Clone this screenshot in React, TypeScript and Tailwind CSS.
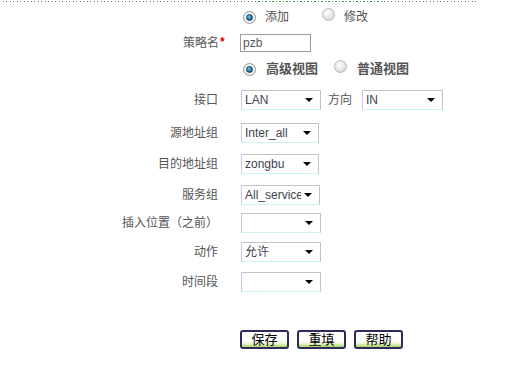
import React from 'react'

const font = "font-['Liberation_Sans','Noto_Sans_CJK_SC',sans-serif]"

function Radio({ checked }: { checked?: boolean }) {
  return checked ? (
    <span className="inline-flex h-[13px] w-[13px] shrink-0 items-center justify-center rounded-full border border-[#9a9a9a] bg-[radial-gradient(circle,#ffffff_40%,#d4d4d4)]">
      <span className="h-[7px] w-[7px] rounded-full border border-[#0d3d5c] bg-[radial-gradient(circle_at_40%_35%,#7ec8ef,#1b6ea6_60%,#0d4a75)]" />
    </span>
  ) : (
    <span className="inline-block h-[13px] w-[13px] shrink-0 rounded-full border border-[#b8b8b8] bg-[radial-gradient(circle_at_40%_35%,#ffffff,#e2e2e2_60%,#c6c6c6)]" />
  )
}

function Select({ value, width = 'w-[80px]' }: { value?: string; width?: string }) {
  return (
    <div
      className={`${width} flex h-[20px] items-center border border-[#c3c3c3] border-l-[#c8c8f4] border-b-[#cdf4f4] bg-white pl-[3px] pr-[7px]`}
    >
      <span className="min-w-0 flex-1 overflow-hidden whitespace-nowrap text-[12px] text-[#3f3f50]">{value}</span>
      <span className="ml-[3px] h-0 w-0 shrink-0 border-x-[4px] border-t-[4px] border-x-transparent border-t-black" />
    </div>
  )
}

function Row({ label, children, className }: { label: React.ReactNode; children: React.ReactNode; className: string }) {
  return (
    <div className={`flex h-[22px] items-center ${className}`}>
      <div className="w-[218px] shrink-0 text-right text-[12px] text-[#555]">{label}</div>
      <div className="ml-[23px] flex items-center">{children}</div>
    </div>
  )
}

function Btn({ children }: { children: React.ReactNode }) {
  return (
    <button className="flex h-[19px] w-[49px] items-center justify-center rounded-[3px] border-2 border-[#2f2a5c] bg-[linear-gradient(to_bottom,#ffffff_55%,#eef8dc_75%,#a9d65e)] text-[13px] leading-none text-black">
      {children}
    </button>
  )
}

export default function App() {
  return (
    <div className={`relative h-[387px] w-[513px] overflow-hidden bg-white ${font}`}>
      {/* dotted separator */}
      <div className="ml-[3px] mt-px h-px w-[473px] bg-[repeating-linear-gradient(90deg,#4b8a4b_0_1px,transparent_1px_3.5px)]" />

      {/* mode */}
      <div className="mt-[4px] flex h-[22px] items-center pl-[243px] text-[12px] text-[#555]">
        <Radio checked />
        <span className="ml-[9px]">添加</span>
        <span className="ml-[33px]"><Radio /></span>
        <span className="ml-[9px]">修改</span>
      </div>

      <div className="mt-[4px] flex h-[22px] items-center">
        <div className="relative w-[219px] shrink-0 text-right text-[12px] text-[#555]">
          策略名
          <span className="absolute left-full top-[-1px] ml-px font-bold text-[#e00000]">*</span>
        </div>
        <div className="ml-[21px] flex h-[18px] w-[71px] items-center border border-[#9c9c9c] pl-[2px] text-[12px] text-[#555]">
          pzb
        </div>
      </div>

      <div className="mt-[4px] flex h-[22px] items-center pl-[243px] text-[13px] font-bold text-[#555]">
        <Radio checked />
        <span className="ml-[10px]">高级视图</span>
        <span className="ml-[16px]"><Radio /></span>
        <span className="ml-[10px]">普通视图</span>
      </div>

      <Row label="接口" className="mt-[9px]">
        <Select value="LAN" />
        <span className="ml-[7px] text-[12px] text-[#555]">方向</span>
        <span className="ml-[10px]"><Select value="IN" width="w-[81px]" /></span>
      </Row>

      <Row label="源地址组" className="mt-[11px]">
        <Select value="Inter_all" width="w-[78px]" />
      </Row>

      <Row label="目的地址组" className="mt-[9px]">
        <Select value="zongbu" width="w-[78px]" />
      </Row>

      <Row label="服务组" className="mt-[9px]">
        <Select value="All_service" width="w-[79px]" />
      </Row>

      <Row label="插入位置（之前）" className="mt-[6px]">
        <Select value="" width="w-[80px]" />
      </Row>

      <Row label="动作" className="mt-[7px]">
        <Select value="允许" width="w-[80px]" />
      </Row>

      <Row label="时间段" className="mt-[8px]">
        <Select value="" width="w-[80px]" />
      </Row>

      <div className="mt-[35px] flex h-[22px] items-center gap-[8px] pl-[240px]">
        <Btn>保存</Btn>
        <Btn>重填</Btn>
        <Btn>帮助</Btn>
      </div>
    </div>
  )
}
